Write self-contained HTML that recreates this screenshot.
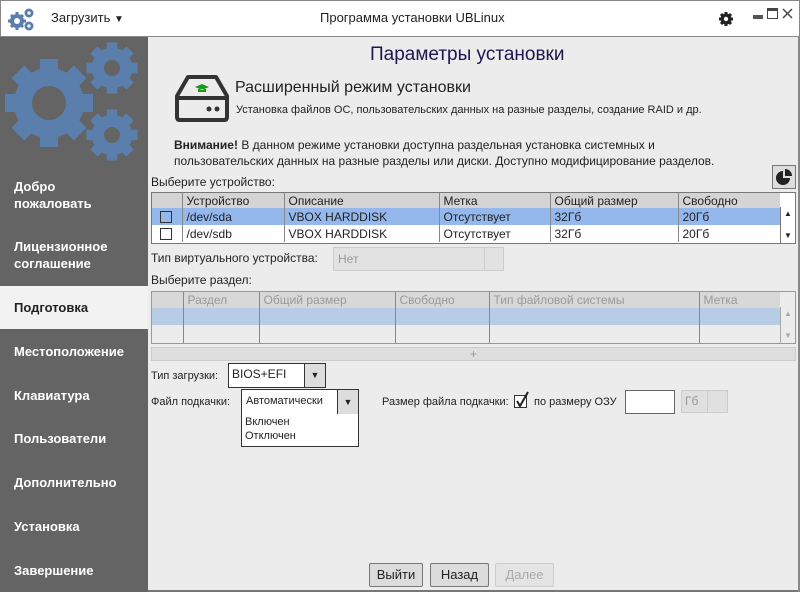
<!DOCTYPE html>
<html><head><meta charset="utf-8"><style>
*{box-sizing:border-box;margin:0;padding:0}
body{width:800px;height:592px;position:relative;overflow:hidden;background:#ececec;font-family:"Liberation Sans","DejaVu Sans",sans-serif;color:#222}
.a{position:absolute;white-space:nowrap}
.side{left:0;top:37px;width:148px;height:555px;background:#646464}
.si{position:absolute;left:14px;color:#fff;font-size:13px;font-weight:bold;line-height:17px}
.f12{font-size:12px}
.f11{font-size:11px}
table{border-collapse:collapse;table-layout:fixed;font-size:12px}
td{border-left:1px solid #888;padding:0 4px;overflow:hidden;white-space:nowrap}
.btn{position:absolute;top:563px;height:24px;border:1px solid #777;background:#dcdcdc;font-size:13px;text-align:center;line-height:22px;border-radius:2px}
.cb{display:inline-block;width:12px;height:12px;border:1px solid #333;background:#fff;vertical-align:middle}
.sb{display:flex;flex-direction:column;justify-content:space-between;align-items:center;font-size:8px;line-height:10px;padding:2px 0}
</style></head><body>
<div class="a" style="left:0;top:0;width:800px;height:37px;background:#fff;border:1px solid #888"></div>
<svg class="a" style="left:8px;top:6px" width="28" height="26" viewBox="0 0 28 26">
<g fill="#5a7fad"><circle cx="9" cy="15" r="7"/><g stroke="#5a7fad" stroke-width="3"><line x1="9" y1="6" x2="9" y2="24"/><line x1="0" y1="15" x2="18" y2="15"/><line x1="3" y1="9" x2="15" y2="21"/><line x1="3" y1="21" x2="15" y2="9"/></g>
<circle cx="21" cy="7" r="4.5"/><circle cx="21" cy="20" r="4.5"/></g>
<circle cx="9" cy="15" r="3" fill="#fff"/><circle cx="21" cy="7" r="1.6" fill="#fff"/><circle cx="21" cy="20" r="1.6" fill="#fff"/></svg>
<div class="a" style="left:51px;top:10px;font-size:13px">Загрузить <span style="font-size:10px">▼</span></div>
<div class="a" style="left:320px;top:10px;font-size:13px">Программа установки UBLinux</div>
<svg class="a" style="left:718px;top:11px" width="16" height="16" viewBox="0 0 16 16"><g fill="#222"><circle cx="8" cy="8" r="5.5"/><g stroke="#222" stroke-width="3"><line x1="8" y1="1" x2="8" y2="15"/><line x1="1" y1="8" x2="15" y2="8"/><line x1="3" y1="3" x2="13" y2="13"/><line x1="3" y1="13" x2="13" y2="3"/></g></g><circle cx="8" cy="8" r="2.2" fill="#fff"/></svg>
<div class="a" style="left:753px;top:15px;width:10px;height:4px;background:#555"></div>
<div class="a" style="left:767px;top:8px;width:11px;height:11px;border:1px solid #444;border-top:3px solid #444"></div>
<svg class="a" style="left:782px;top:8px" width="11" height="11" viewBox="0 0 11 11"><path d="M1 1L10 10M10 1L1 10" stroke="#444" stroke-width="1.5"/></svg>

<div class="a side"></div>
<svg class="a" style="left:0;top:37px" width="148" height="130" viewBox="0 37 148 130">
<defs><g id="g"><circle r="35"/><g><rect x="-9" y="-44" width="18" height="88"/><rect x="-9" y="-44" width="18" height="88" transform="rotate(45)"/><rect x="-9" y="-44" width="18" height="88" transform="rotate(90)"/><rect x="-9" y="-44" width="18" height="88" transform="rotate(135)"/></g></g></defs>
<g fill="#5a7fad"><use href="#g" transform="translate(49,103)"/><use href="#g" transform="translate(112,68) scale(0.58)"/><use href="#g" transform="translate(112,135) scale(0.58)"/></g>
<g fill="#646464"><circle cx="49" cy="103" r="17"/><circle cx="112" cy="68" r="8"/><circle cx="112" cy="135" r="8"/></g></svg>
<div class="si" style="top:178px">Добро<br>пожаловать</div>
<div class="si" style="top:238px">Лицензионное<br>соглашение</div>
<div class="a" style="left:0;top:286px;width:148px;height:43px;background:#f2f2f2"></div>
<div class="si" style="top:299px;color:#222">Подготовка</div>
<div class="si" style="top:343px">Местоположение</div>
<div class="si" style="top:387px">Клавиатура</div>
<div class="si" style="top:430px">Пользователи</div>
<div class="si" style="top:474px">Дополнительно</div>
<div class="si" style="top:518px">Установка</div>
<div class="si" style="top:562px">Завершение</div>

<div class="a" style="left:370px;top:44px;font-size:19px;color:#1e1650">Параметры установки</div>
<svg class="a" style="left:174px;top:74px" width="56" height="48" viewBox="0 0 56 48">
<path d="M14 3 H42 L53 22 V43 Q53 46 50 46 H6 Q3 46 3 43 V22 Z" fill="none" stroke="#333" stroke-width="4" stroke-linejoin="round"/>
<line x1="3" y1="24" x2="53" y2="24" stroke="#333" stroke-width="4"/>
<circle cx="35" cy="35" r="2.5" fill="#333"/><circle cx="43" cy="35" r="2.5" fill="#333"/>
<path d="M21 13 L28 10 L35 13 L28 16Z M24 15 V18 H32 V15" fill="#1a9a1a"/></svg>
<div class="a" style="left:235px;top:79px;font-size:16px">Расширенный режим установки</div>
<div class="a f11" style="left:236px;top:104px">Установка файлов ОС, пользовательских данных на разные разделы, создание RAID и др.</div>
<div class="a f12" style="left:174px;top:137px;line-height:16px"><b>Внимание!</b> В данном режиме установки доступна раздельная установка системных и<br>пользовательских данных на разные разделы или диски. Доступно модифицирование разделов.</div>
<div class="a" style="left:772px;top:165px;width:24px;height:24px;border:1px solid #777;background:#ddd"></div>
<svg class="a" style="left:776px;top:169px" width="16" height="16" viewBox="0 0 16 16"><path d="M7 2 A7 7 0 1 0 14 9 H7Z" fill="#222"/><path d="M9 0 A7 7 0 0 1 16 7 H9Z" fill="#222"/></svg>
<div class="a f12" style="left:151px;top:175px">Выберите устройство:</div>

<div class="a" style="left:151px;top:192px;width:645px;height:52px;border:1px solid #777;background:#fff;overflow:hidden">
<table style="width:628px">
<colgroup><col style="width:30px"><col style="width:102px"><col style="width:155px"><col style="width:111px"><col style="width:128px"><col style="width:102px"></colgroup>
<tr style="background:#d4d4d4;height:15px"><td style="border-left:0"></td><td>Устройство</td><td>Описание</td><td>Метка</td><td>Общий размер</td><td>Свободно</td></tr>
<tr style="background:#94b8ec;height:17px"><td style="border-left:0;padding-left:8px"><span class="cb" style="background:#94b8ec"></span></td><td>/dev/sda</td><td>VBOX HARDDISK</td><td>Отсутствует</td><td>32Гб</td><td>20Гб</td></tr>
<tr style="height:17px"><td style="border-left:0;padding-left:8px"><span class="cb"></span></td><td>/dev/sdb</td><td>VBOX HARDDISK</td><td>Отсутствует</td><td>32Гб</td><td>20Гб</td></tr>
</table>
<div class="a sb" style="left:628px;top:14px;width:15px;height:36px;border-left:1px solid #777;background:#fff"><span>▲</span><span>▼</span></div>
</div>

<div class="a f12" style="left:151px;top:251px">Тип виртуального устройства:</div>
<div class="a f12" style="left:333px;top:247px;width:171px;height:24px;border:1px solid #ccc;background:#e2e2e2;color:#999;padding:4px"><span>Нет</span><div class="a" style="left:150px;top:0;width:1px;height:22px;background:#ccc"></div></div>
<div class="a f12" style="left:151px;top:273px">Выберите раздел:</div>

<div class="a" style="left:151px;top:291px;width:645px;height:53px;border:1px solid #999;background:#ececec;overflow:hidden;color:#999">
<table style="width:628px">
<colgroup><col style="width:31px"><col style="width:76px"><col style="width:136px"><col style="width:94px"><col style="width:210px"><col style="width:81px"></colgroup>
<tr style="background:#d8d8d8;height:16px"><td style="border-left:0"></td><td>Раздел</td><td>Общий размер</td><td>Свободно</td><td>Тип файловой системы</td><td>Метка</td></tr>
<tr style="background:#b9cce6;height:17px"><td style="border-left:0"></td><td></td><td></td><td></td><td></td><td></td></tr>
<tr style="height:18px"><td style="border-left:0"></td><td></td><td></td><td></td><td></td><td></td></tr>
</table>
<div class="a sb" style="left:628px;top:15px;width:15px;height:36px;border-left:1px solid #aaa;color:#aaa"><span>▲</span><span>▼</span></div>
</div>
<div class="a" style="left:151px;top:347px;width:645px;height:14px;border:1px solid #ccc;background:#dedede;color:#999;text-align:center;font-size:12px;line-height:12px">+</div>

<div class="a f11" style="left:151px;top:370px">Тип загрузки:</div>
<div class="a f12" style="left:228px;top:363px;width:98px;height:25px;border:1px solid #333;background:#fff;padding:3px 3px"><span>BIOS+EFI</span><div class="a" style="left:75px;top:0;width:21px;height:23px;border-left:1px solid #333;background:#ddd;font-size:9px;text-align:center;line-height:23px">▼</div></div>
<div class="a f11" style="left:151px;top:396px">Файл подкачки:</div>
<div class="a f11" style="left:241px;top:389px;width:118px;height:26px;border:1px solid #333;background:#fff;padding:5px 4px"><span>Автоматически</span><div class="a" style="left:95px;top:0;width:21px;height:24px;border-left:1px solid #333;background:#ddd;font-size:9px;text-align:center;line-height:24px">▼</div></div>
<div class="a f11" style="left:241px;top:414px;width:118px;height:33px;border:1px solid #333;border-top:0;background:#fff;padding:1px 3px;line-height:14px">Включен<br>Отключен</div>
<div class="a f11" style="left:382px;top:396px">Размер файла подкачки:</div>
<div class="a" style="left:514px;top:395px;width:13px;height:13px;border:1px solid #333;background:#fff"></div>
<svg class="a" style="left:514px;top:391px" width="16" height="17" viewBox="0 0 16 17"><path d="M3 10L6 15L14 1" fill="none" stroke="#222" stroke-width="2"/></svg>
<div class="a f11" style="left:534px;top:396px">по размеру ОЗУ</div>
<div class="a" style="left:625px;top:390px;width:50px;height:24px;border:1px solid #666;background:#fff"></div>
<div class="a f12" style="left:681px;top:390px;width:47px;height:23px;border:1px solid #ccc;background:#e0e0e0;color:#999;padding:3px"><span>Гб</span><div class="a" style="left:25px;top:0;width:1px;height:21px;background:#ccc"></div></div>

<div class="btn" style="left:369px;width:54px">Выйти</div>
<div class="btn" style="left:430px;width:59px">Назад</div>
<div class="btn" style="left:495px;width:59px;border-color:#ccc;color:#aaa;background:#e4e4e4">Далее</div>
<div class="a" style="left:148px;top:590px;width:652px;height:2px;background:#777"></div>
<div class="a" style="left:798px;top:37px;width:2px;height:555px;background:#888"></div>
</body></html>
